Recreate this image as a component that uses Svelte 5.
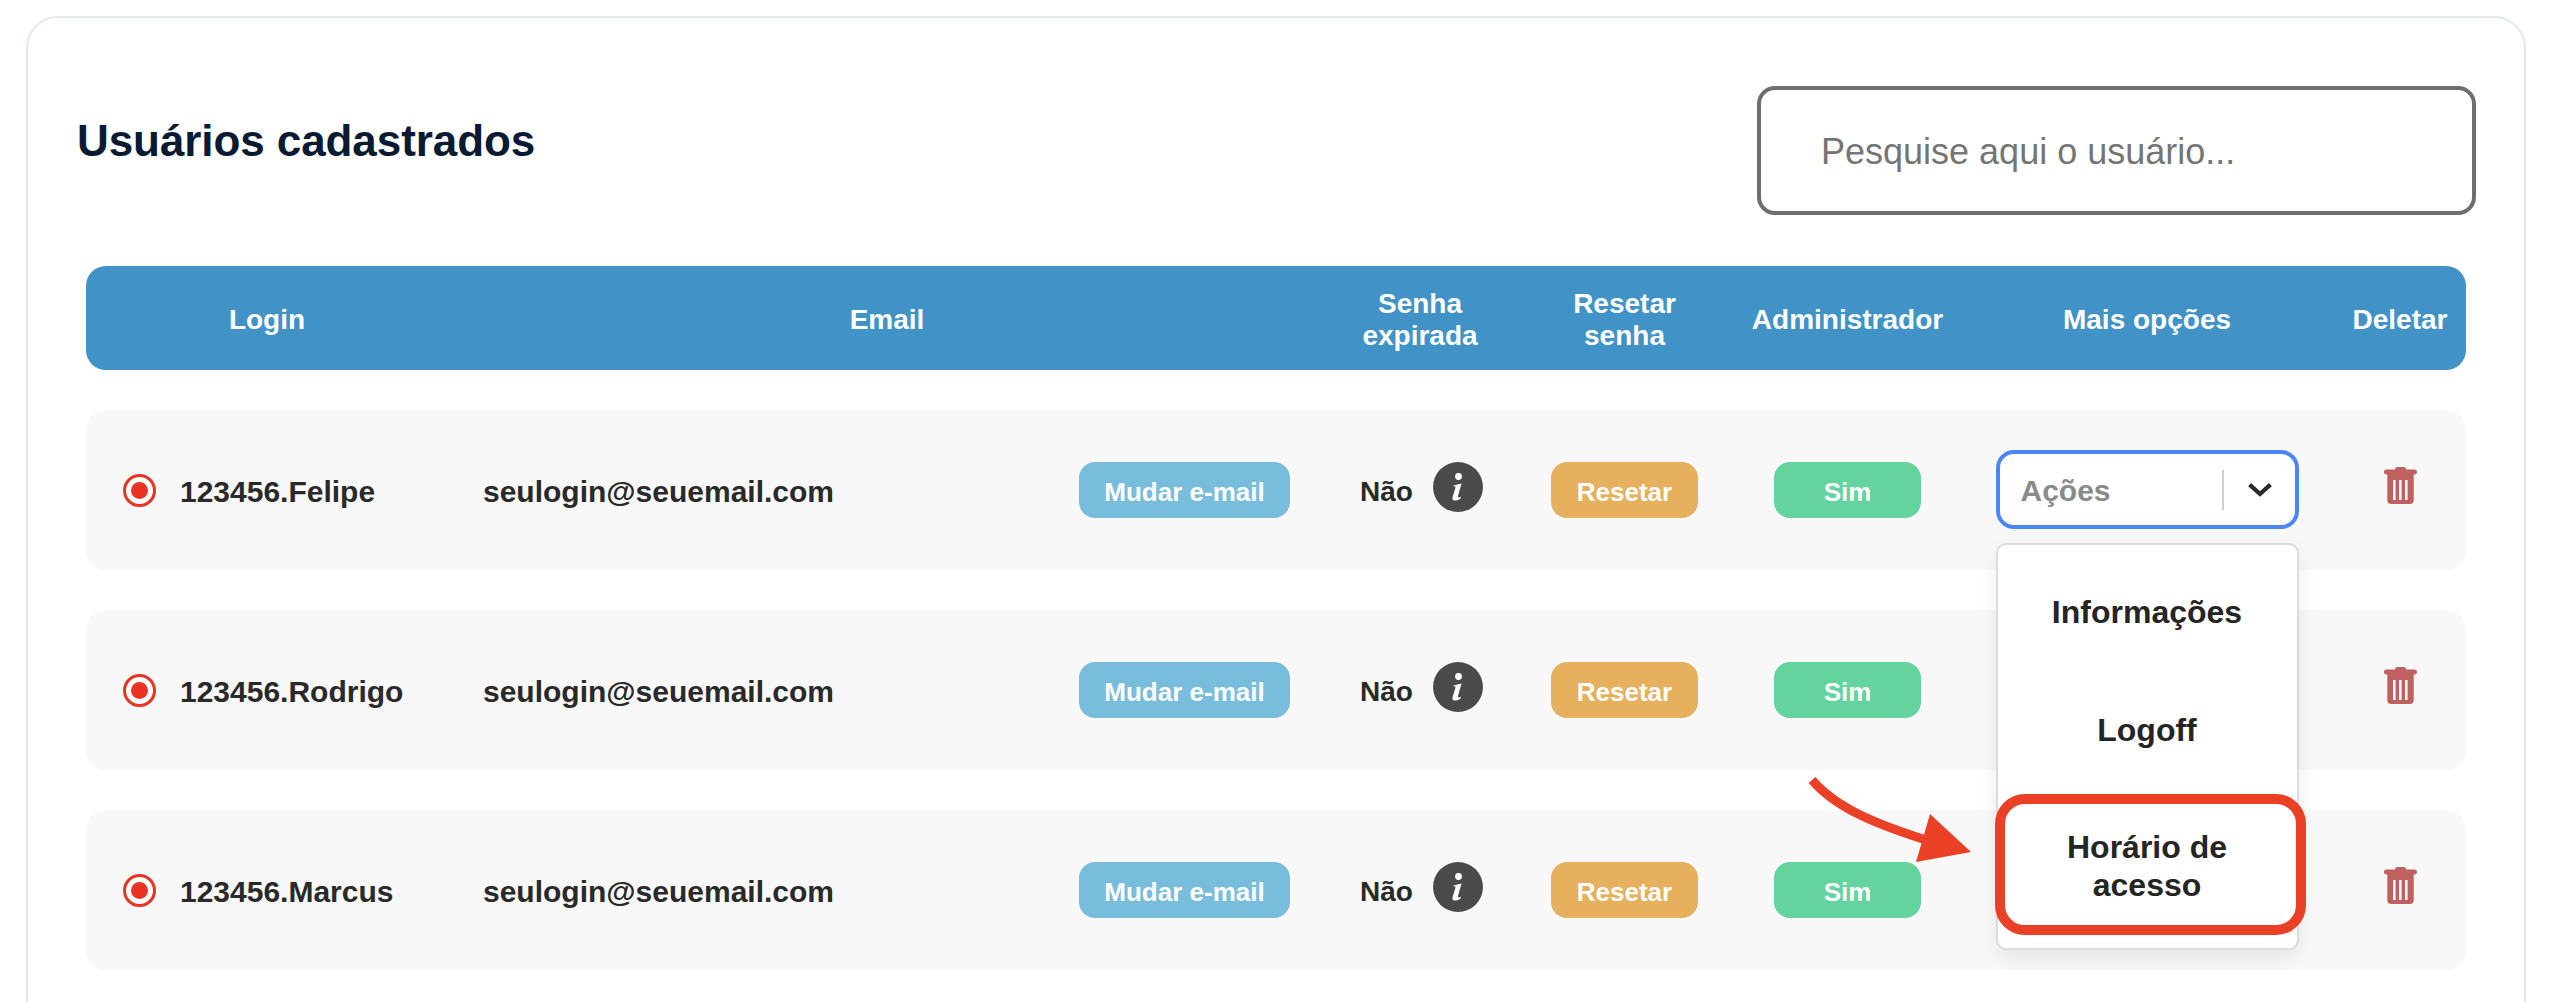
<script>
  const users = ['123456.Felipe', '123456.Rodrigo', '123456.Marcus'];
</script>

<div class="card">
  <div class="top">
    <h1>Usuários cadastrados</h1>
    <div class="search"><span class="tx">Pesquise aqui o usuário...</span></div>
  </div>
  <div class="table">
    <div class="grid head">
      <div>Login</div>
      <div>Email</div>
      <div>Senha<br />expirada</div>
      <div>Resetar<br />senha</div>
      <div>Administrador</div>
      <div>Mais opções</div>
      <div>Deletar</div>
    </div>
    {#each users as user, i}
      <div class="grid row">
        <div class="login">
          <span class="radio"><span></span></span>
          <span class="tx">{user}</span>
        </div>
        <div class="email">
          <span class="tx">seulogin@seuemail.com</span>
          <button class="btn blue wide">Mudar e-mail</button>
        </div>
        <div class="expired">
          <span class="tx">Não</span>
          <svg class="info" viewBox="0 0 50 50" width="50" height="50">
            <circle cx="25" cy="25" r="25" fill="#4a4a4a" />
            <circle cx="25.5" cy="14.5" r="3.4" fill="#fff" />
            <path fill="#fff" d="M20.5 23.5 L28.5 21.5 L25 34 Q24.6 36.4 27.6 34.8 L27.6 36.4 Q24 39 21 38.5 Q19 38 19.6 35 L22.5 25.4 Q22.8 23.7 20.7 24.4 Z" />
          </svg>
        </div>
        <div class="center"><button class="btn orange">Resetar</button></div>
        <div class="center"><button class="btn green">Sim</button></div>
        <div class="center">
          {#if i === 0}
            <div class="select">
              <span class="ph tx">Ações</span>
              <span class="divider"></span>
              <svg class="chev" viewBox="0 0 24 14" width="24" height="14">
                <path d="M1.6 1.6 L12 11 L22.4 1.6" fill="none" stroke="#2a2a2a" stroke-width="4.2" />
              </svg>
              <div class="menu">
                <div class="item">Informações</div>
                <div class="item">Logoff</div>
                <div class="item third">Horário de<br />acesso</div>
                <div class="mark"></div>
              </div>
            </div>
          {/if}
        </div>
        <div class="center">
          <svg class="trash" viewBox="0 0 33 37" width="33" height="37">
            <path fill-rule="evenodd" fill="#c06060" d="M11 2.5 Q11 0 13.5 0 H19.5 Q22 0 22 2.5 H30.5 Q33 2.5 33 5 Q33 7.5 30.5 7.5 H29.7 V33 Q29.7 37 25.7 37 H7.3 Q3.3 37 3.3 33 V7.5 H2.5 Q0 7.5 0 5 Q0 2.5 2.5 2.5 Z M9 13 V33 H11.6 V13 Z M15 13 V33 H17.6 V13 Z M21 13 V33 H23.6 V13 Z" />
          </svg>
        </div>
      </div>
    {/each}
  </div>
  <svg class="arrow" viewBox="0 0 170 90" width="170" height="90">
    <path d="M-2 -2 C22 26 62 42 112 58" fill="none" stroke="#ea4025" stroke-width="9" />
    <path d="M116 32 L157 70 L102 80 Z" fill="#ea4025" />
  </svg>
</div>

<style>
  :global(html), :global(body) { margin: 0; overflow: hidden; height: 100%; background: #fff; }
  .card {
    position: relative;
    box-sizing: border-box;
    width: 2500px;
    height: 1200px;
    margin: 16px 0 0 26px;
    border: 2px solid #e5e8ec;
    border-radius: 32px;
    font-family: "Liberation Sans", Arial, sans-serif;
    font-weight: 700;
    color: #2a2a2a;
  }
  .top {
    display: flex;
    justify-content: space-between;
    align-items: flex-start;
    margin: 68px 48px 51px 49px;
  }
  h1 {
    margin: 30px 0 0;
    font-size: 44px;
    line-height: 50px;
    letter-spacing: -0.08px;
    color: #0b1a33;
  }
  .search {
    box-sizing: border-box;
    width: 719px;
    height: 129px;
    display: flex;
    align-items: center;
    padding-left: 60px;
    border: 4px solid #6e6e6e;
    border-radius: 18px;
    font-size: 36px;
    font-weight: 400;
    color: #757575;
  }
  .tx { padding-top: 3px; }
  .table {
    display: flex;
    flex-direction: column;
    gap: 40px;
    margin: 0 58px;
  }
  .grid {
    display: grid;
    grid-template-columns: 362px 878px 188px 221px 225px 374px 132px;
    align-items: center;
    font-size: 28px;
  }
  .head {
    box-sizing: border-box;
    height: 104px;
    padding-top: 3px;
    background: #4192c6;
    border-radius: 20px;
    color: #fff;
    text-align: center;
    line-height: 32px;
  }
  .row {
    height: 160px;
    background: #f8f8f8;
    border-radius: 20px;
    font-size: 30px;
  }
  .login { display: flex; align-items: center; gap: 24px; padding-left: 37px; }
  .radio {
    box-sizing: border-box;
    width: 33px;
    height: 33px;
    display: flex;
    align-items: center;
    justify-content: center;
    border: 3px solid #ea3323;
    border-radius: 50%;
    background: #fff;
  }
  .radio span { width: 17px; height: 17px; border-radius: 50%; background: #ea3323; }
  .email { display: flex; align-items: center; justify-content: space-between; padding: 0 36px 0 35px; }
  .expired { display: flex; align-items: center; gap: 20px; padding-left: 34px; font-size: 28px; }
  .info { margin-top: -6px; }
  .center { display: flex; justify-content: center; align-items: center; }
  .btn {
    box-sizing: border-box;
    width: 147px;
    height: 56px;
    padding: 4px 0 0;
    border: 0;
    border-radius: 16px;
    color: #fff;
    font: 700 26px "Liberation Sans", Arial, sans-serif;
  }
  .wide { width: 211px; }
  .blue { background: #78bddc; }
  .orange { background: #e6b05f; }
  .green { background: #64d39d; }
  .select {
    position: relative;
    box-sizing: border-box;
    width: 303px;
    height: 79px;
    display: flex;
    align-items: center;
    padding: 0 23px 0 21px;
    margin-bottom: 1px;
    background: #fff;
    border: 4px solid #4a86f7;
    border-radius: 18px;
  }
  .ph { flex: 1; color: #8a8a8a; font-size: 30px; }
  .divider { width: 2px; height: 40px; background: #cfcfcf; margin-right: 24px; }
  .menu {
    position: absolute;
    left: -4px;
    top: 89px;
    box-sizing: border-box;
    width: 303px;
    height: 407px;
    padding-top: 8px;
    background: #fff;
    border: 2px solid #dcdcdc;
    border-radius: 10px;
    box-shadow: 0 8px 20px rgba(0, 0, 0, 0.08);
    z-index: 2;
  }
  .item {
    height: 118px;
    display: flex;
    align-items: center;
    justify-content: center;
    text-align: center;
    font-size: 32px;
    line-height: 38px;
    color: #252525;
  }
  .third { padding-top: 18px; }
  .mark {
    position: absolute;
    left: -3px;
    top: 249px;
    box-sizing: border-box;
    width: 311px;
    height: 141px;
    border: 10px solid #ea4025;
    border-radius: 30px;
  }
  .trash { margin-bottom: 9px; }
  .arrow { position: absolute; left: 1786px; top: 764px; z-index: 3; overflow: visible; }
</style>
